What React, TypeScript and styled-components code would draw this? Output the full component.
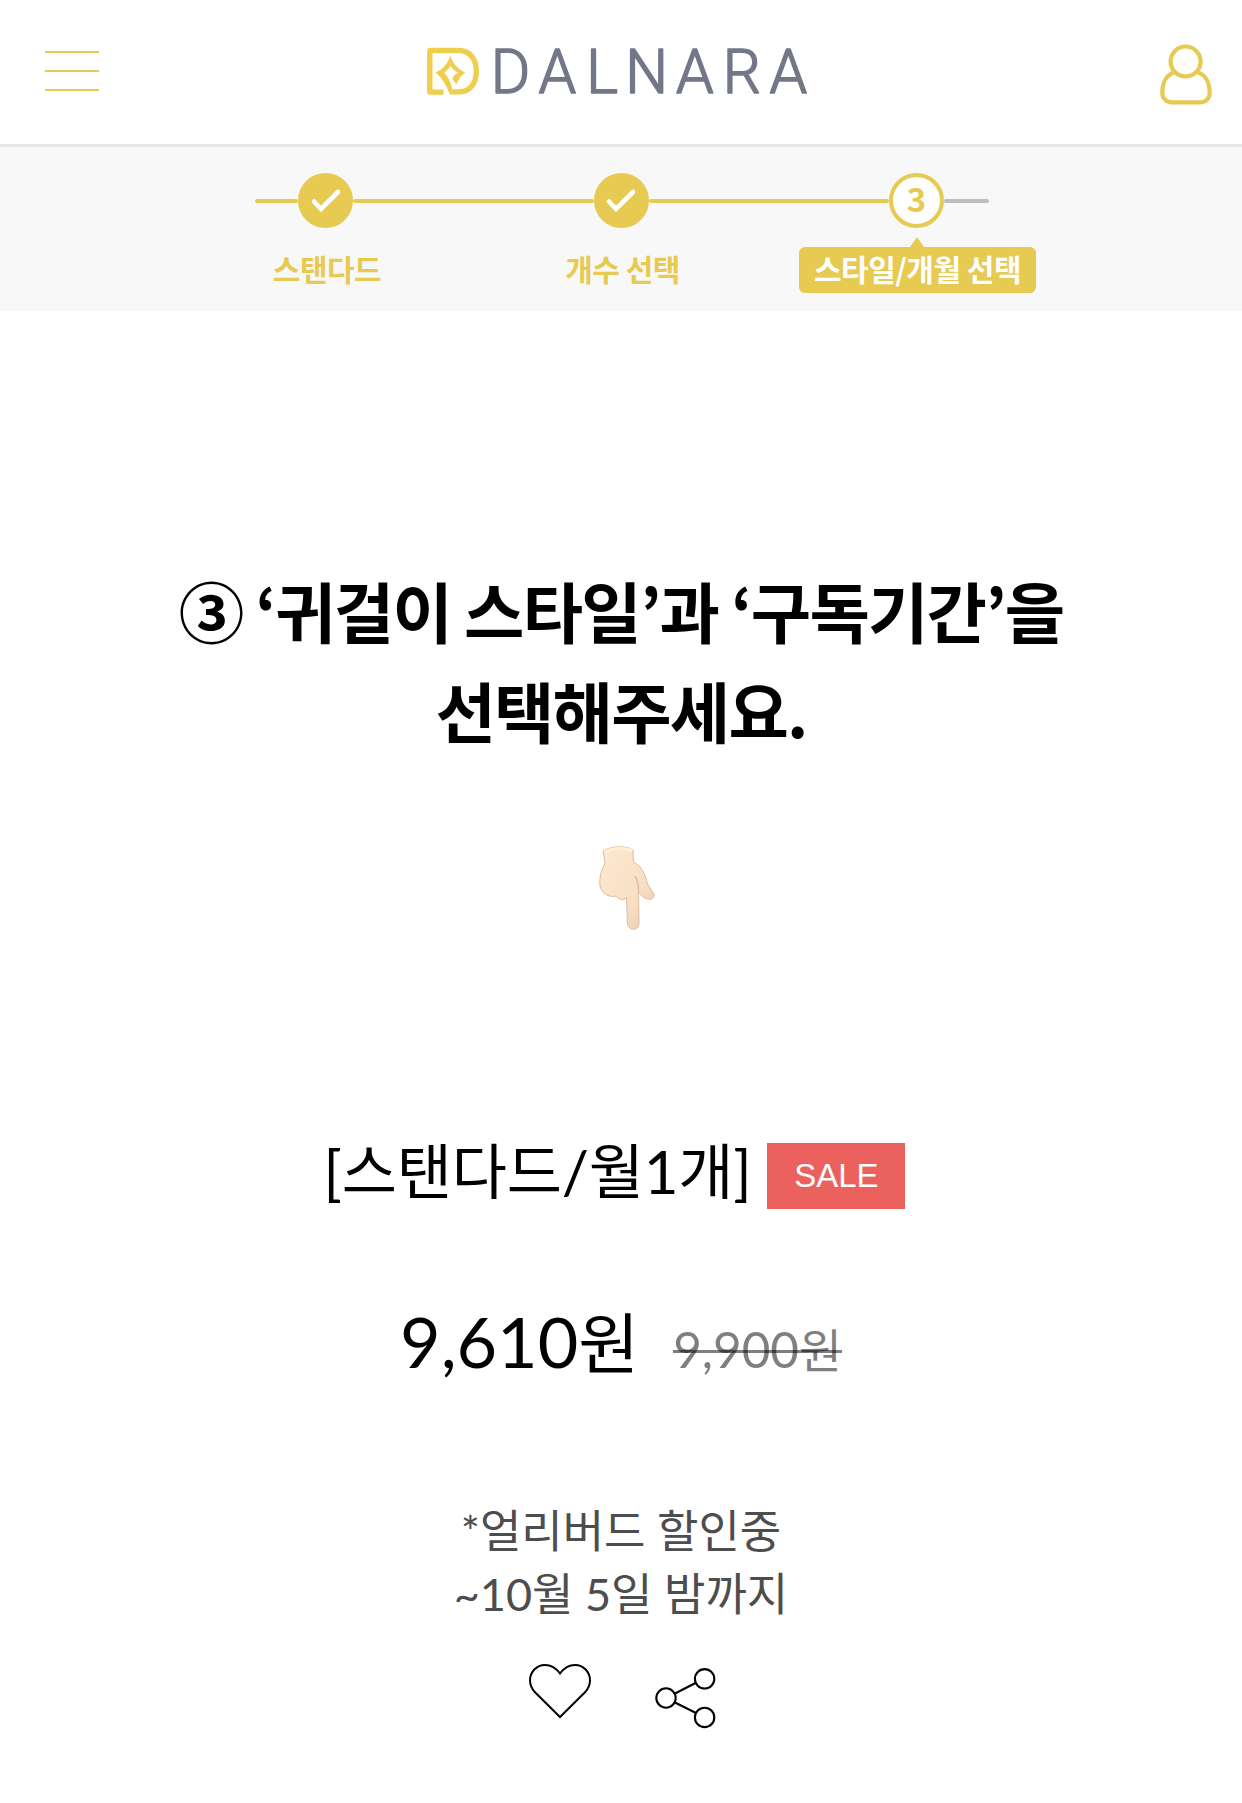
import React from 'react';
import styled, { createGlobalStyle } from 'styled-components';

const gold = '#e6ca52';

const GlobalStyle = createGlobalStyle`
  * { box-sizing: border-box; }
  body { margin: 0; background: #fff; }
`;

const Page = styled.div`
  width: 1242px;
  min-height: 1803px;
  background: #fff;
  color: #000;
  font-family: Lato, 'Noto Sans CJK KR', sans-serif;
`;

const Header = styled.header`
  display: grid;
  grid-template-columns: 371px 1fr auto;
  align-items: start;
  height: 147px;
  padding: 44px 30px 0 45px;
  border-bottom: 3px solid #e6e6e6;
`;

const IconButton = styled.button`
  display: block;
  padding: 0;
  border: 0;
  background: none;
  line-height: 0;
`;

const MenuButton = styled(IconButton)`
  display: grid;
  width: 54px;
  gap: 17px;
  padding-top: 6.6px;
`;

const Bar = styled.span`
  height: 2.3px;
  background: ${gold};
`;

const Logo = styled.a`
  display: block;
  line-height: 0;
`;

const Steps = styled.section`
  height: 164px;
  padding-top: 26px;
  background: #f8f8f8;
  font-family: 'Noto Sans CJK KR', sans-serif;
`;

const Track = styled.div`
  display: flex;
  align-items: center;
  margin-left: 255px;
  height: 55px;
`;

const Segment = styled.span<{ $w: number; $pending?: boolean }>`
  width: ${(p) => p.$w}px;
  height: 4px;
  margin-top: 1px;
  background: ${(p) => (p.$pending ? '#bcbdc2' : gold)};
  border-radius: 2px;
`;

const Dot = styled.span<{ $current?: boolean }>`
  display: flex;
  align-items: center;
  justify-content: center;
  flex: none;
  width: 55px;
  height: 55px;
  padding-bottom: ${(p) => (p.$current ? 5 : 0)}px;
  border-radius: 50%;
  border: 4px solid ${gold};
  background: ${(p) => (p.$current ? '#fff' : gold)};
  color: ${gold};
  font-size: 33px;
  font-weight: 700;
  line-height: 42px;
`;

const Labels = styled.div`
  display: flex;
  margin: 9px 0 0 179px;
`;

const LabelCell = styled.div<{ $w: number }>`
  display: flex;
  flex-direction: column;
  align-items: center;
  width: ${(p) => p.$w}px;
`;

const Caret = styled.span<{ $visible?: boolean }>`
  width: 0;
  height: 10px;
  margin-right: 2px;
  border: 7px solid transparent;
  border-top: 0;
  border-bottom: 10px solid ${(p) => (p.$visible ? gold : 'transparent')};
`;

const Label = styled.span<{ $current?: boolean }>`
  height: 45.5px;
  padding: 0 ${(p) => (p.$current ? '15px' : 0)};
  border-radius: 6px;
  background: ${(p) => (p.$current ? gold : 'transparent')};
  color: ${(p) => (p.$current ? '#fff' : gold)};
  font-size: 30px;
  font-weight: 700;
  letter-spacing: -0.5px;
  line-height: 43px;
  white-space: nowrap;
`;

const Heading = styled.h1`
  margin: 249px 0 0;
  font-family: 'Noto Sans CJK KR', sans-serif;
  font-size: 65.6px;
  font-weight: 700;
  line-height: 100px;
  letter-spacing: -1.75px;
  text-align: center;
`;

const Pointer = styled.div`
  display: flex;
  justify-content: center;
  height: 90px;
  margin-top: 84.5px;
  padding-left: 11px;
`;

const Product = styled.section`
  display: flex;
  flex-direction: column;
  align-items: center;
`;

const TitleRow = styled.div`
  display: flex;
  gap: 16px;
  margin: 203px 0 0 -13px;
  height: 70px;
`;

const Title = styled.h2`
  margin: 0;
  font-size: 60px;
  font-weight: 400;
  letter-spacing: -0.2px;
  line-height: 67px;
`;

const Sale = styled.span`
  width: 138px;
  height: 66px;
  margin-top: 5px;
  background: #ea615e;
  color: #fff;
  font-family: 'Liberation Sans', Arial, sans-serif;
  font-size: 33px;
  line-height: 66px;
  text-align: center;
`;

const PriceRow = styled.div`
  display: flex;
  align-items: baseline;
  gap: 34px;
  height: 80px;
  margin-top: 93px;
`;

const Price = styled.strong`
  font-size: 70px;
  font-weight: 400;
  line-height: 80px;
`;

const OldPrice = styled.del`
  position: relative;
  color: rgba(0, 0, 0, 0.5);
  font-size: 49.4px;
  line-height: 80px;
  text-decoration: none;

  &::after {
    content: '';
    position: absolute;
    left: 0;
    right: 0;
    top: 41px;
    height: 3px;
    background: currentColor;
  }
`;

const Won = styled.span`
  font-size: 0.945em;
`;

const Note = styled.p`
  margin: 119px 0 0;
  color: #4d4d4d;
  font-size: 45px;
  line-height: 63px;
  text-align: center;
`;

const Actions = styled.div`
  display: flex;
  align-items: flex-end;
  gap: 63px;
  margin-top: 36px;
  padding-left: 2px;
`;

const LikeButton = styled(IconButton)`
  padding-bottom: 10px;
`;

const CheckMark = () => (
  <svg width="32" height="26" viewBox="0 0 32 26" fill="none">
    <path d="M4 13.500 11 21 28 4" stroke="#fff" strokeWidth="4.600" strokeLinecap="round" />
  </svg>
);

const LogoArt = () => (
  <svg width="402" height="60" viewBox="416 44 402 60" overflow="visible">
    <path
      fill="none"
      stroke="#edcf4d"
      strokeWidth="5.400"
      d="M443.500 92.100H430.500a.7.7 0 0 1-.7-.7V51.200a.7.7 0 0 1 .7-.7H459c10.600 0 17.300 8.300 17.300 20.700s-6.700 20.700-17.300 20.700h-6.700"
    />
    <path
      fill="#edcf4d"
      fillRule="evenodd"
      d="M450.300 55.500C452.500 63.500 458.500 69.500 465.300 72.500C461.500 75 458.200 79 456.500 84.500L452.500 78.800L453.500 76L458 72.500C454.500 71 452 68.500 450.500 65.500C449 68.500 446.800 71 444.200 72.700C448.500 77.500 452 83 453 94.600H450C446.500 86 442 77.500 435.500 72.500C442.500 69.500 448.200 63.500 450.300 55.500Z"
    />
    <text
      x="510.500 557.400 602 646.700 694.800 741.800 788.400"
      y="92.900"
      textAnchor="middle"
      fontFamily="Roboto, sans-serif"
      fontWeight="300"
      fontSize="60.200"
      fill="#737788"
      stroke="#737788"
      strokeWidth="1.600"
      strokeLinejoin="round"
    >
      DALNARA
    </text>
  </svg>
);

const UserIcon = () => (
  <svg width="52" height="62" viewBox="0 0 52 62" fill="none" stroke={gold} strokeWidth="4.200">
    <circle cx="25.600" cy="17.500" r="15" />
    <path d="M14.500 28.200C7 30.500 2.300 38 2.300 49c0 5.500 4.200 9.300 9.700 9.300h28c5.500 0 9.700-3.800 9.700-9.300 0-11-4.700-18.500-12.200-20.800" />
  </svg>
);

const HandIcon = () => (
  <svg width="58" height="86" viewBox="0 0 58 86">
    <defs>
      <linearGradient id="skin" x1="0" y1="0" x2="1" y2="1">
        <stop offset="0" stopColor="#fde8cf" />
        <stop offset="0.600" stopColor="#f8e0c6" />
        <stop offset="1" stopColor="#eccbaa" />
      </linearGradient>
    </defs>
    <path
      d="M5 6C13 1 27 0 35 5L35.500 17C44 21 47 29 49.500 39L56 49C57 53 52 56 47 53C41 50 39 44 40.500 40L41 79C40.500 86 30.500 86 29.500 79L28.500 53C24 56 20 54 18.500 51C11 53 3 48 2 41C1 31 4 24 7 18Z"
      fill="url(#skin)"
      stroke="#dfbd9c"
      strokeWidth="1"
      strokeLinejoin="round"
    />
    <path d="M6 7C15 3 27 2 34 6" fill="none" stroke="#fff0dc" strokeWidth="3" />
    <path d="M40 40C39.500 36 38.500 33 37 31" fill="none" stroke="#e2bf9b" strokeWidth="1.600" />
  </svg>
);

const HeartIcon = () => (
  <svg width="64" height="58" viewBox="0 0 64 58" fill="none" stroke="#000" strokeWidth="2">
    <path d="M32 11.500C28 6 23 3 17 3 8.500 3 2 10 2 18.500 2 23.500 4 27 7 30.300L32 55 57 30.300C60 27 62 23.500 62 18.500 62 10 55.500 3 47 3 41 3 36 6 32 11.500Z" />
  </svg>
);

const ShareIcon = () => (
  <svg width="62" height="62" viewBox="0 0 62 62" fill="none" stroke="#000" strokeWidth="2.100">
    <circle cx="11" cy="30" r="9.700" />
    <circle cx="49.600" cy="10.800" r="9.700" />
    <circle cx="49.600" cy="49.400" r="9.700" />
    <path d="M20 25.500 40.500 15M20 34.500 40.500 44.700" />
  </svg>
);

export default function App() {
  return (
    <Page>
      <GlobalStyle />
      <Header>
        <MenuButton aria-label="menu">
          <Bar />
          <Bar />
          <Bar />
        </MenuButton>
        <Logo>
          <LogoArt />
        </Logo>
        <IconButton aria-label="account">
          <UserIcon />
        </IconButton>
      </Header>
      <Steps>
        <Track>
          <Segment $w={43} />
          <Dot><CheckMark /></Dot>
          <Segment $w={240.5} />
          <Dot><CheckMark /></Dot>
          <Segment $w={240.5} />
          <Dot $current>3</Dot>
          <Segment $w={45} $pending />
        </Track>
        <Labels>
          <LabelCell $w={296}>
            <Caret />
            <Label>스탠다드</Label>
          </LabelCell>
          <LabelCell $w={295}>
            <Caret />
            <Label>개수 선택</Label>
          </LabelCell>
          <LabelCell $w={295}>
            <Caret $visible />
            <Label $current>스타일/개월 선택</Label>
          </LabelCell>
        </Labels>
      </Steps>
      <Heading>
        ③ ‘귀걸이 스타일’과 ‘구독기간’을
        <br />
        선택해주세요.
      </Heading>
      <Pointer>
        <HandIcon />
      </Pointer>
      <Product>
        <TitleRow>
          <Title>[스탠다드/월1개]</Title>
          <Sale>SALE</Sale>
        </TitleRow>
        <PriceRow>
          <Price>9,610<Won>원</Won></Price>
          <OldPrice>9,900<Won>원</Won></OldPrice>
        </PriceRow>
        <Note>
          *얼리버드 할인중
          <br />
          ~10월 5일 밤까지
        </Note>
        <Actions>
          <LikeButton aria-label="like">
            <HeartIcon />
          </LikeButton>
          <IconButton aria-label="share">
            <ShareIcon />
          </IconButton>
        </Actions>
      </Product>
    </Page>
  );
}
